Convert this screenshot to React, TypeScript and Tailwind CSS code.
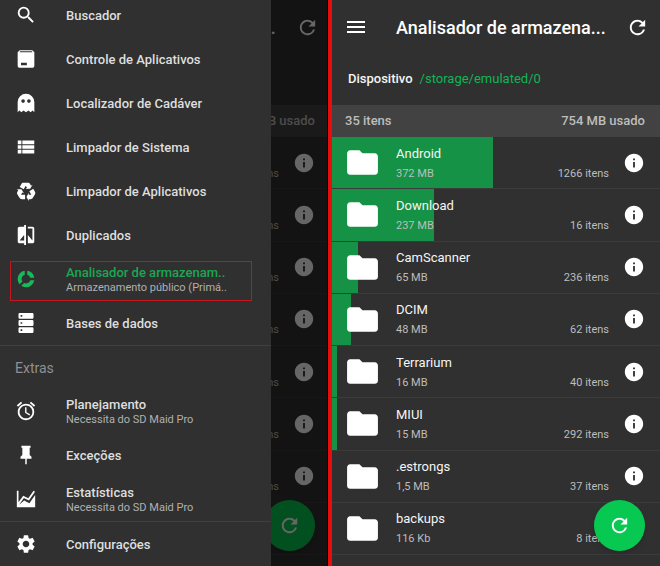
import type { ReactNode } from "react";
import {
  MdAlarm,
  MdCompare,
  MdFolder,
  MdInfo,
  MdMenu,
  MdRefresh,
  MdSearch,
  MdSettings,
  MdViewList,
} from "react-icons/md";

type Folder = { name: string; size: string; mb: number; count: string };

const TOTAL_MB = 754;

const folders: Folder[] = [
  { name: "Android", size: "372 MB", mb: 372, count: "1266 itens" },
  { name: "Download", size: "237 MB", mb: 237, count: "16 itens" },
  { name: "CamScanner", size: "65 MB", mb: 65, count: "236 itens" },
  { name: "DCIM", size: "48 MB", mb: 48, count: "62 itens" },
  { name: "Terrarium", size: "16 MB", mb: 16, count: "40 itens" },
  { name: "MIUI", size: "15 MB", mb: 15, count: "292 itens" },
  { name: ".estrongs", size: "1,5 MB", mb: 1.5, count: "37 itens" },
  { name: "backups", size: "116 Kb", mb: 0.1, count: "8 itens" },
];

function Glyph({ children, large = false }: { children: ReactNode; large?: boolean }) {
  return (
    <svg
      viewBox="0 0 24 24"
      className={large ? "size-[22px]" : "size-5"}
      fill="currentColor"
      fillRule="evenodd"
      aria-hidden="true"
    >
      {children}
    </svg>
  );
}

const AppBoxIcon = () => (
  <Glyph>
    <path d="M4.500 1.500h15L22 4v16.500a2 2 0 0 1-2 2H4a2 2 0 0 1-2-2V4zM5 2.800l-.9 1h15.800l-.9-1zM6 16.500v3h7v-3z" />
  </Glyph>
);
const GhostIcon = () => (
  <Glyph>
    <path d="M12 1A10 10 0 0 0 2 11v12l2-2 2.500 2L9 21l3 2 3-2 2.500 2 2.500-2 2 2V11A10 10 0 0 0 12 1M8.500 7.500a2.200 2.200 0 1 1 0 4.400 2.200 2.200 0 0 1 0-4.400m7 0a2.200 2.200 0 1 1 0 4.400 2.200 2.200 0 0 1 0-4.400" />
  </Glyph>
);
const RecycleIcon = () => (
  <Glyph large>
    <path d="M21.820 15.420 19.320 19.750C18.830 20.610 17.920 21.060 17 21H15V23L12.500 18.500 15 14V16H17.820L15.600 12.150 19.930 9.650 21.730 12.770C22.250 13.540 22.320 14.570 21.820 15.420M9.210 3.060H14.210C15.190 3.060 16.040 3.630 16.450 4.450L17.450 6.190 19.180 5.190 16.540 9.600 11.390 9.690 13.120 8.690 11.710 6.240 9.500 10.090 5.160 7.590 6.960 4.470C7.370 3.640 8.220 3.060 9.210 3.060M5.050 19.760 2.550 15.430C2.060 14.580 2.130 13.560 2.640 12.790L3.640 11.060 1.910 10.060 7.050 10.140 9.700 14.560 7.970 13.560 6.560 16H11V21H7.400C6.470 21.070 5.550 20.610 5.050 19.760" />
  </Glyph>
);
const DonutIcon = () => (
  <Glyph>
    <path d="M13.500 2.100v4.800A5.300 5.300 0 0 1 17.100 10.500h4.800A10 10 0 0 0 13.500 2.100M10.500 2.100A10 10 0 0 0 4.200 18.200l3.500-3.200A5.300 5.300 0 0 1 10.500 6.900M17.100 13.500A5.300 5.300 0 0 1 9.700 16.800l-3.400 3.400A10 10 0 0 0 21.900 13.500" />
  </Glyph>
);
const ServerIcon = () => (
  <Glyph>
    <path d="M4.500 0h15A1.500 1.500 0 0 1 21 1.500v4A1.500 1.500 0 0 1 19.500 7h-15A1.500 1.500 0 0 1 3 5.500v-4A1.500 1.500 0 0 1 4.500 0m0 8.500h15A1.500 1.500 0 0 1 21 10v4a1.500 1.500 0 0 1-1.500 1.500h-15A1.500 1.500 0 0 1 3 14v-4a1.500 1.500 0 0 1 1.500-1.500m0 8.500h15a1.500 1.500 0 0 1 1.500 1.500v4a1.500 1.500 0 0 1-1.500 1.500h-15A1.500 1.500 0 0 1 3 22.500v-4A1.500 1.500 0 0 1 4.500 17M5.500 2.500v2h2v-2zm0 8.500v2h2v-2zm0 8.500v2h2v-2z" />
  </Glyph>
);
const PinIcon = () => (
  <Glyph large>
    <path d="M16 12V4h1V2H7v2h1v8l-2 2v2h5.200v6h1.600v-6H18v-2z" />
  </Glyph>
);
const StatsIcon = () => (
  <Glyph large>
    <path d="M2 3h1.800v12.500L9 8.500l5.500 2.800L20.300 3l1.500 1-6.600 9.700-5.500-2.800-5.200 7.300L10 13.500l5.700 3L22 7.500V21H2z" />
  </Glyph>
);

type Entry = { label: string; sub?: string; icon: ReactNode; selected?: boolean };

const tools: Entry[] = [
  { label: "Buscador", icon: <MdSearch /> },
  { label: "Controle de Aplicativos", icon: <AppBoxIcon /> },
  { label: "Localizador de Cadáver", icon: <GhostIcon /> },
  { label: "Limpador de Sistema", icon: <MdViewList /> },
  { label: "Limpador de Aplicativos", icon: <RecycleIcon /> },
  { label: "Duplicados", icon: <MdCompare /> },
  {
    label: "Analisador de armazenam..",
    sub: "Armazenamento público (Primá..",
    icon: <DonutIcon />,
    selected: true,
  },
  { label: "Bases de dados", icon: <ServerIcon /> },
];

const extras: Entry[] = [
  { label: "Planejamento", sub: "Necessita do SD Maid Pro", icon: <MdAlarm /> },
  { label: "Exceções", icon: <PinIcon /> },
  { label: "Estatísticas", sub: "Necessita do SD Maid Pro", icon: <StatsIcon /> },
];

function DrawerItem({ entry }: { entry: Entry }) {
  return (
    <button
      type="button"
      className="relative flex h-11 w-full shrink-0 items-center gap-[29px] pl-[15px] text-left"
    >
      <span
        className={`flex w-[22px] shrink-0 justify-center text-[22px] ${
          entry.selected ? "text-[#19b85a]" : "text-white"
        }`}
      >
        {entry.icon}
      </span>
      <span className="flex flex-col pt-0.5">
        <span
          className={`text-[13px] leading-4 font-medium whitespace-nowrap ${
            entry.selected ? "text-[#1ba653]" : "text-[#dedede]"
          }`}
        >
          {entry.label}
        </span>
        {entry.sub && (
          <span className="text-[11px] leading-[14px] whitespace-nowrap text-[#b0b0b0]">{entry.sub}</span>
        )}
      </span>
      {entry.selected && (
        <span className="absolute top-1 right-[19px] bottom-0 left-[10px] border border-[#c4161c]" />
      )}
    </button>
  );
}

function Drawer() {
  return (
    <nav className="absolute inset-y-0 left-0 flex w-[271px] flex-col justify-end overflow-hidden bg-[#303030]">
      {tools.map((t) => (
        <DrawerItem key={t.label} entry={t} />
      ))}
      <hr className="shrink-0 border-[#404040]" />
      <h2 className="flex h-[43px] shrink-0 items-center pl-[15px] text-sm text-[#8f8f8f]">Extras</h2>
      {extras.map((t) => (
        <DrawerItem key={t.label} entry={t} />
      ))}
      <hr className="shrink-0 border-[#404040]" />
      <DrawerItem entry={{ label: "Configurações", icon: <MdSettings /> }} />
    </nav>
  );
}

/* While the drawer is open, the labels that lie under it are left unpainted. */
type Covered = { covered: boolean };

function FolderRow({ folder, covered }: { folder: Folder } & Covered) {
  const label = covered ? "invisible" : "";
  return (
    <li className="relative flex items-center border-b border-[#3b3b3b] pr-[15px] pl-[14px]">
      {folder.mb > 2 && (
        <span
          className="absolute inset-y-0 left-0 bg-[#159245]"
          style={{ width: `${(folder.mb / TOTAL_MB) * 100}%` }}
        />
      )}
      <MdFolder className="relative size-[37px] shrink-0 text-white" />
      <span className="relative ml-[15px] flex flex-1 flex-col gap-1 pt-0.5">
        <span className={`text-[13px] leading-4 text-[#f5f5f5] ${label}`}>{folder.name}</span>
        <span className="flex justify-between text-[11px] leading-4 text-[#bdbdbd]">
          <span className={label}>{folder.size}</span>
          <span>{folder.count}</span>
        </span>
      </span>
      <button type="button" aria-label="Informações" className="relative ml-[14px] text-white">
        <MdInfo className="size-[22px]" />
      </button>
    </li>
  );
}

function StorageScreen({ covered }: Covered) {
  const label = covered ? "invisible" : "";
  return (
    <div className="relative h-full overflow-hidden bg-[#303030]">
      <header className="flex h-[54px] items-center pr-[11px] pl-[14px] text-white">
        <button type="button" aria-label="Menu">
          <MdMenu className="size-6" />
        </button>
        <h1 className="ml-7 flex-1 pt-0.5 text-lg font-medium whitespace-nowrap">
          <span className={label}>Analisador de armazena</span>...
        </h1>
        <button type="button" aria-label="Atualizar">
          <MdRefresh className="size-[23px]" />
        </button>
      </header>
      <div
        className={`flex h-[51px] items-center gap-[7px] pb-0.5 pl-[18px] text-[13px] font-medium text-[#f5f5f5] ${label}`}
      >
        <span>Dispositivo</span>
        <a href="#storage" className="font-normal text-[#12b455]">
          /storage/emulated/0
        </a>
      </div>
      <div className="flex h-8 items-center justify-between bg-[#424242] px-[15px] text-[13px] font-medium text-[#bdbdbd]">
        <span className={label}>35 itens</span>
        <span>754 MB usado</span>
      </div>
      <ul className="grid h-[418px] grid-rows-8">
        {folders.map((f) => (
          <FolderRow key={f.name} folder={f} covered={covered} />
        ))}
      </ul>
      <button
        type="button"
        aria-label="Analisar novamente"
        className="absolute right-[15px] bottom-[15px] flex size-[51px] items-center justify-center rounded-full bg-[#07c952] text-white shadow-md"
      >
        <MdRefresh className="size-[23px]" />
      </button>
    </div>
  );
}

export default function App() {
  return (
    <main className="relative grid h-screen grid-cols-2 overflow-hidden font-[Roboto,sans-serif]">
      <section className="relative overflow-hidden">
        <StorageScreen covered />
        <div className="absolute inset-0 bg-black/60" />
        <Drawer />
      </section>
      <section className="overflow-hidden">
        <StorageScreen covered={false} />
      </section>
      <div className="absolute inset-y-0 left-1/2 w-[5px] -translate-x-[3px] border-l border-black bg-[#e80d0d]" />
    </main>
  );
}
